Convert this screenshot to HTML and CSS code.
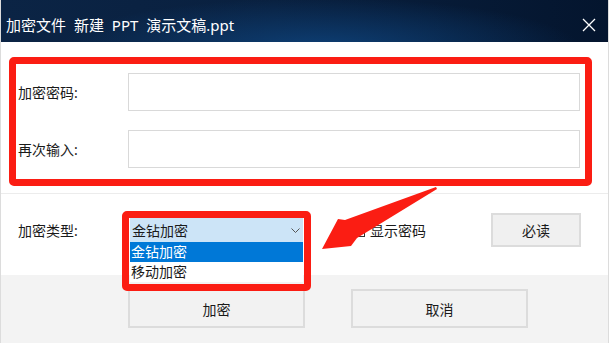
FILE: index.html
```html
<!DOCTYPE html>
<html lang="zh-CN">
<head>
    <meta charset="UTF-8">
    <meta name="viewport" content="width=device-width, initial-scale=1.0">
    <title>加密文件</title>
    <link rel="stylesheet" href="styles.css">
</head>
<body>
    <div class="window">
        <header class="titlebar">
            <span class="title">加密文件 新建 PPT 演示文稿.ppt</span>
            <svg class="close" width="14" height="14" viewBox="0 0 14 14">
                <path d="M1 1 L13 13 M13 1 L1 13" stroke="#fff" stroke-width="1.3" fill="none"/>
            </svg>
        </header>

        <main class="content">
            <section class="pwd-box">
                <div class="field">
                    <label>加密密码:</label>
                    <input type="password">
                </div>
                <div class="field">
                    <label>再次输入:</label>
                    <input type="password">
                </div>
            </section>

            <div class="divider"></div>

            <div class="type-row">
                <span class="label">加密类型:</span>
                <div class="select">
                    <div class="select-value">
                        <span>金钻加密</span>
                        <svg class="chevron" width="9" height="5" viewBox="0 0 9 5">
                            <path d="M0.5 0.5 L4.5 4.5 L8.5 0.5" stroke="#555" stroke-width="1" fill="none"/>
                        </svg>
                    </div>
                    <ul class="options">
                        <li class="active">金钻加密</li>
                        <li>移动加密</li>
                    </ul>
                    <div class="mark"></div>
                </div>
                <label class="check"><span class="box"></span>显示密码</label>
                <button class="btn read-btn">必读</button>
            </div>
        </main>

        <footer class="actions">
            <button class="btn">加密</button>
            <button class="btn">取消</button>
        </footer>

        <!-- annotation arrow -->
        <svg class="arrow" width="610" height="343" viewBox="0 0 610 343">
            <polygon points="436,187 345,220 338,219 322,249 351,246 357,238 437,189" fill="#fb1d13"/>
        </svg>
    </div>
</body>
</html>
```

FILE: styles.css
```css
* {
    margin: 0;
    padding: 0;
    box-sizing: border-box;
}
body {
    background: #fff;
    font-family: "Noto Sans", "Noto Sans CJK SC", sans-serif;
    font-size: 14px;
    color: #1a1a1a;
}
.window {
    position: relative;
    width: 609px;
    height: 343px;
    overflow: hidden;
    border-left: 1px solid #dcdcdc;
    border-right: 1px solid #dcdcdc;
    display: flex;
    flex-direction: column;
}
.titlebar {
    height: 42px;
    flex-shrink: 0;
    display: flex;
    align-items: center;
    justify-content: space-between;
    padding: 8px 13px 0 6px;
    margin-left: -1px;
    margin-right: -1px;
    color: #fff;
    background:
        radial-gradient(ellipse 260px 50px at 320px 48px, rgba(14, 66, 122, 0.9), rgba(14, 66, 122, 0)),
        linear-gradient(90deg, #0b2445, #09203f 45%, #04152e);
}
.title {
    font-size: 15px;
    word-spacing: 4px;
    line-height: 20px;
}
.close {
    display: block;
}
.content {
    flex: 1;
    background: #fff;
}
.pwd-box {
    margin: 15px 16px 0 8px;
    border: 7px solid #fb1d13;
    border-radius: 5px;
    padding: 9px 5px 11px 2px;
}
.field {
    display: flex;
    align-items: center;
}
.field + .field {
    margin-top: 19px;
}
.field label {
    width: 110px;
}
.field input {
    flex: 1;
    height: 38px;
    border: 1px solid #d9d9d9;
    outline: none;
}
.divider {
    margin-top: 7px;
    height: 1px;
    background: #ececec;
}
.type-row {
    height: 81px;
    display: flex;
    align-items: flex-start;
    padding: 19px 27px 0 17px;
}
.type-row > * {
    height: 34px;
    display: flex;
    align-items: center;
}
.label {
    width: 112px;
}
.select {
    position: relative;
    z-index: 2;
    width: 173px;
}
.select-value {
    width: 100%;
    height: 24px;
    background: #cce4f7;
    display: flex;
    align-items: center;
    justify-content: space-between;
    padding: 0 3px 0 2px;
}
.chevron {
    display: block;
}
.options {
    position: absolute;
    top: 29px;
    left: 0;
    width: 100%;
    list-style: none;
    background: #fff;
}
.options li {
    height: 20px;
    line-height: 20px;
    padding-left: 1px;
}
.options li.active {
    background: #0078d7;
    color: #fff;
}
.mark {
    position: absolute;
    top: -2px;
    left: -8px;
    right: -8px;
    height: 80px;
    border: 7px solid #fb1d13;
    border-radius: 5px;
}
.check {
    margin-left: 49px;
    gap: 5px;
}
.check .box {
    width: 13px;
    height: 13px;
    border: 1px solid #333;
    background: #fff;
}
.btn {
    font-family: inherit;
    font-size: 14px;
    color: #1a1a1a;
    background: #f2f2f2;
    border: 2px solid #dcdcdc;
    outline: none;
}
.read-btn {
    margin-left: auto;
    width: 90px;
    justify-content: center;
    background: #f0f0f0;
}
.actions {
    height: 68px;
    flex-shrink: 0;
    background: #f3f3f3;
    display: flex;
    gap: 46px;
    padding: 14px 0 0 127px;
}
.actions .btn {
    width: 177px;
    height: 39px;
}
.arrow {
    position: absolute;
    left: -1px;
    top: 0;
    pointer-events: none;
}
```
